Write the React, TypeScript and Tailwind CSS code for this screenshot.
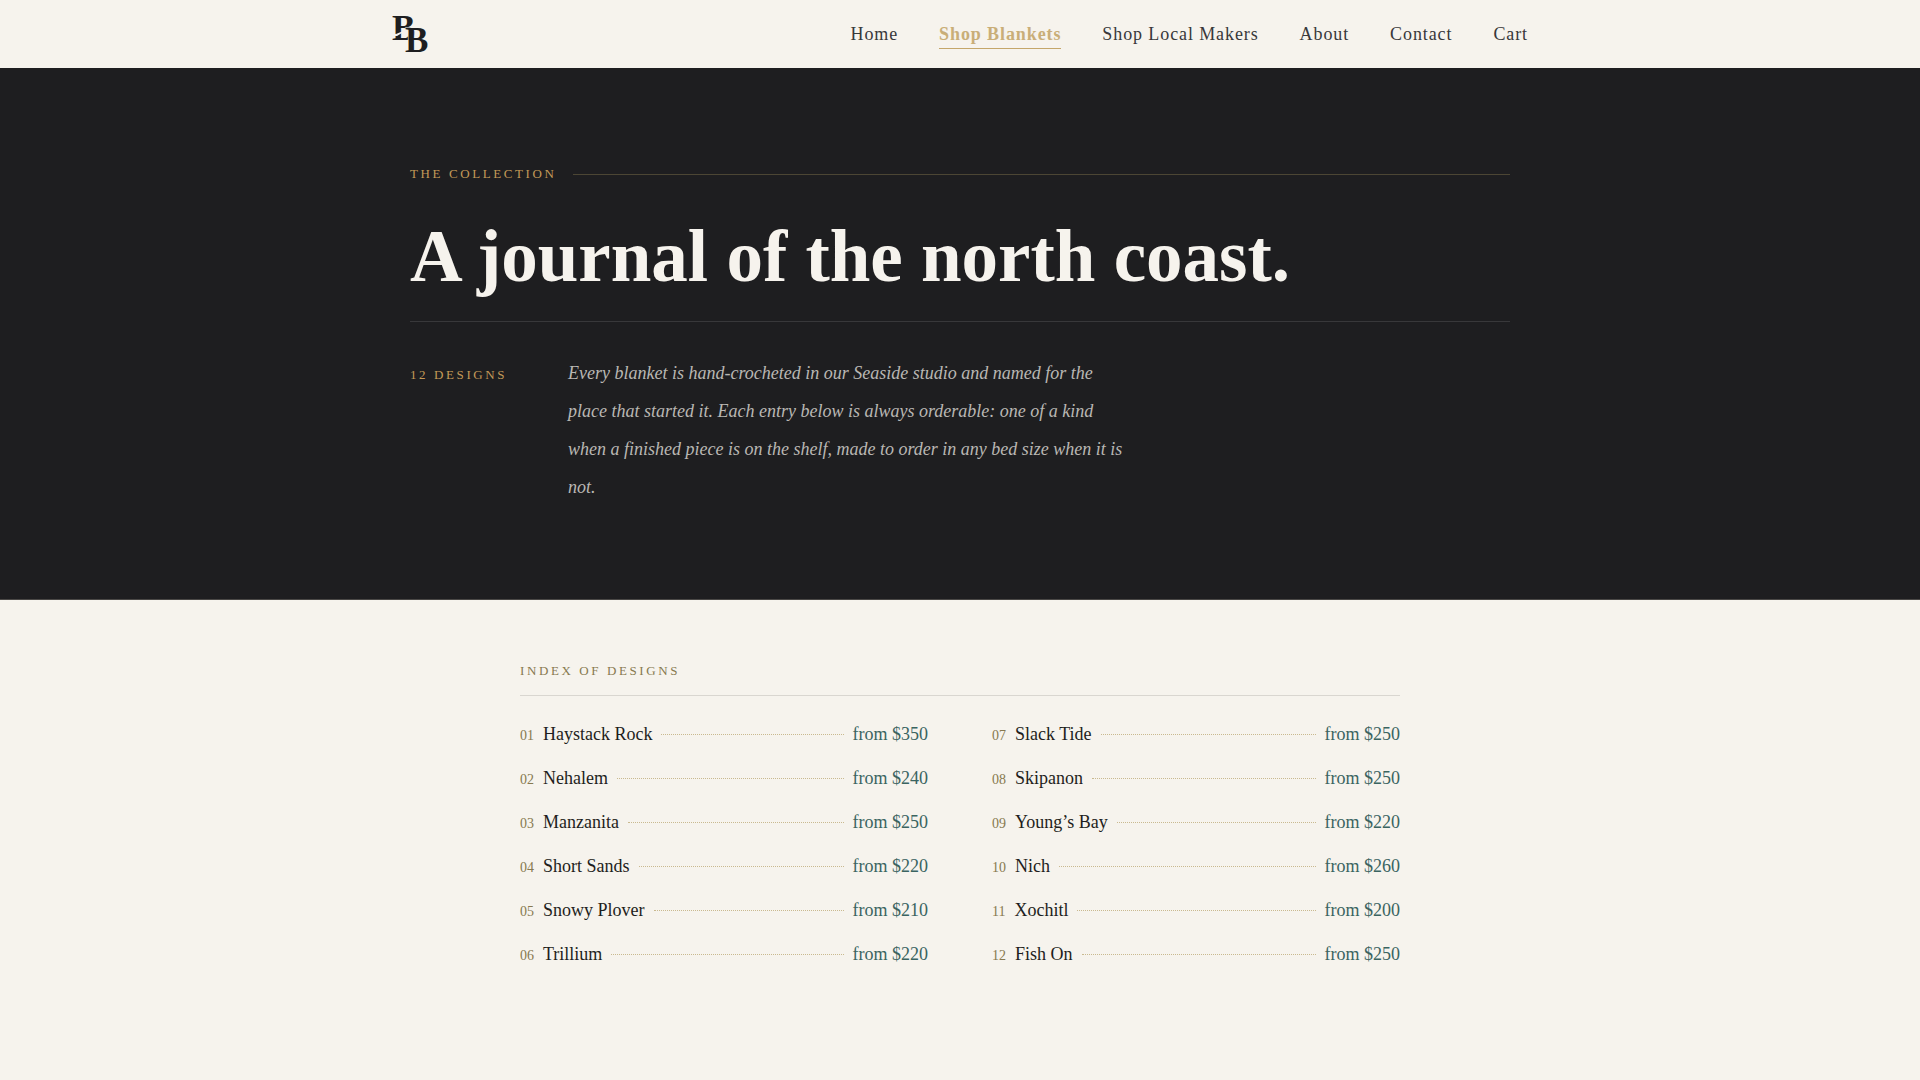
import React from 'react';

interface NavItem {
  label: string;
  href: string;
  active?: boolean;
}

interface Design {
  name: string;
  price: number;
}

const navItems: NavItem[] = [
  { label: 'Home', href: '#home' },
  { label: 'Shop Blankets', href: '#blankets', active: true },
  { label: 'Shop Local Makers', href: '#makers' },
  { label: 'About', href: '#about' },
  { label: 'Contact', href: '#contact' },
  { label: 'Cart', href: '#cart' },
];

const designs: Design[] = [
  { name: 'Haystack Rock', price: 350 },
  { name: 'Nehalem', price: 240 },
  { name: 'Manzanita', price: 250 },
  { name: 'Short Sands', price: 220 },
  { name: 'Snowy Plover', price: 210 },
  { name: 'Trillium', price: 220 },
  { name: 'Slack Tide', price: 250 },
  { name: 'Skipanon', price: 250 },
  { name: 'Young’s Bay', price: 220 },
  { name: 'Nich', price: 260 },
  { name: 'Xochitl', price: 200 },
  { name: 'Fish On', price: 250 },
];

// Two interlocking initials, the first one notched through its stem
const Logo: React.FC = () => (
  <svg width="40" height="52" viewBox="0 0 40 52" fill="#1e1e20" className="font-bold">
    <text x="0" y="32" fontSize="35">B</text>
    <path d="M0 25.5 L4 26 L10 23.5 L10 25 L5 28 L0 28 Z" fill="#f6f3ed" />
    <text x="13" y="44" fontSize="35" stroke="#f6f3ed" strokeWidth="1" paintOrder="stroke">B</text>
  </svg>
);

const Header: React.FC = () => (
  <header className="bg-[#f6f3ed]">
    <div className="mx-auto flex h-[68px] max-w-[1200px] items-center justify-between px-8">
      <a href="#home" aria-label="Home">
        <Logo />
      </a>
      <nav className="flex items-center gap-[41px]">
        {navItems.map((item) => (
          <a
            key={item.label}
            href={item.href}
            className={
              item.active
                ? 'border-b border-[#c4a66a] text-lg font-bold tracking-[0.05em] text-[#c9ae78]'
                : 'border-b border-transparent text-lg tracking-[0.05em] text-[#38383a]'
            }
          >
            {item.label}
          </a>
        ))}
      </nav>
    </div>
  </header>
);

const Hero: React.FC = () => (
  <section className="border-b border-[#4a4846] bg-[#1e1e20] px-8 pt-24 pb-[93px]">
    <div className="mx-auto max-w-[1100px]">
      <div className="flex items-center gap-4">
        <p className="text-[13px] leading-5 tracking-[0.2em] text-[#c39a58] uppercase">The Collection</p>
        <span className="h-px flex-1 bg-[#4c4634]" />
      </div>
      <h1 className="mt-8 border-b border-[#38383a] pb-6 text-[73px] leading-[81px] font-bold text-[#f6f3ed]">
        A journal of the north coast.
      </h1>
      <div className="mt-8 grid grid-cols-[158px_1fr] items-start">
        <p className="pt-[11px] text-[13px] leading-5 tracking-[0.2em] text-[#c39a58] uppercase">12 Designs</p>
        <p className="max-w-[562px] text-lg leading-[38px] text-[#b9b7b3] italic">
          Every blanket is hand-crocheted in our Seaside studio and named for the place that started it.
          Each entry below is always orderable: one of a kind when a finished piece is on the shelf, made
          to order in any bed size when it is not.
        </p>
      </div>
    </div>
  </section>
);

const DesignIndex: React.FC = () => (
  <section className="px-8 pt-[61px] pb-24">
    <div className="mx-auto max-w-[880px]">
      <h2 className="border-b border-[#d9d6d0] pb-[14px] text-[13px] leading-5 tracking-[0.2em] text-[#87794f] uppercase">
        Index of Designs
      </h2>
      <ol className="mt-4 grid grid-flow-col grid-cols-2 grid-rows-6 gap-x-16">
        {designs.map((design, i) => (
          <li key={design.name}>
            <a href={`#design-${i + 1}`} className="flex h-11 items-center gap-[9px] text-lg">
              <span className="flex items-baseline gap-[9px]">
                <span className="text-sm text-[#87794f]">{String(i + 1).padStart(2, '0')}</span>
                <span className="text-[#1e1e20]">{design.name}</span>
              </span>
              <span className="flex-1 border-b border-dotted border-[#c9b98f]" />
              <span className="text-[#3a6461]">from ${design.price}</span>
            </a>
          </li>
        ))}
      </ol>
    </div>
  </section>
);

const App: React.FC = () => (
  <div className="min-h-screen bg-[#f6f3ed] font-['Liberation_Serif',serif]">
    <Header />
    <main>
      <Hero />
      <DesignIndex />
    </main>
  </div>
);

export default App;
